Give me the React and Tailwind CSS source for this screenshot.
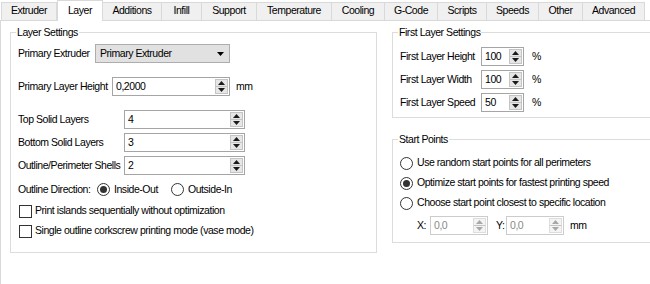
import React from "react";

const tabs = [
  { label: "Extruder", w: "w-[56px]" },
  { label: "Layer", w: "w-[46px]", active: true },
  { label: "Additions", w: "w-[59px]" },
  { label: "Infill", w: "w-[40px]" },
  { label: "Support", w: "w-[55px]" },
  { label: "Temperature", w: "w-[75px]" },
  { label: "Cooling", w: "w-[53px]" },
  { label: "G-Code", w: "w-[53px]" },
  { label: "Scripts", w: "w-[49px]" },
  { label: "Speeds", w: "w-[52px]" },
  { label: "Other", w: "w-[44px]" },
  { label: "Advanced", w: "w-[62px]" },
];

function Arrow({ up, color = "#000" }) {
  return (
    <svg width="7" height="4" viewBox="0 0 7 4" className="block">
      {up ? <path d="M0 4 L3.5 0 L7 4 Z" fill={color} /> : <path d="M0 0 L7 0 L3.5 4 Z" fill={color} />}
    </svg>
  );
}

function Spin({ value, width, disabled }) {
  return (
    <div
      className={`flex shrink-0 h-[19px] bg-white border ${width} ${
        disabled ? "border-[#cccccc] text-[#8a8a8a]" : "border-[#a5a5a5] text-black"
      }`}
    >
      <span className="flex-1 pl-[3px] leading-[17px] overflow-hidden">{value}</span>
      <div
        className={`flex flex-col w-[13px] my-px mr-px border ${
          disabled ? "border-[#dddddd] bg-[#f4f4f4]" : "border-[#c4c4c4] bg-[#e6e6e6]"
        }`}
      >
        <div className="flex-1 flex items-center justify-center border-b border-[#c4c4c4]">
          <Arrow up color={disabled ? "#a8a8a8" : "#1a1a1a"} />
        </div>
        <div className="flex-1 flex items-center justify-center">
          <Arrow color={disabled ? "#a8a8a8" : "#1a1a1a"} />
        </div>
      </div>
    </div>
  );
}

function Radio({ checked }) {
  return (
    <span className="w-[13px] h-[13px] rounded-full border border-[#333333] bg-white flex items-center justify-center shrink-0">
      {checked && <span className="w-[7px] h-[7px] rounded-full bg-[#333333]" />}
    </span>
  );
}

function Check() {
  return <span className="w-[13px] h-[13px] border border-[#333333] bg-white shrink-0" />;
}

function Group({ title, className, children }) {
  return (
    <div className={`relative border border-[#dcdcdc] ${className}`}>
      <span className="absolute -top-[7px] left-[5px] px-px bg-white leading-[13px]">{title}</span>
      {children}
    </div>
  );
}

export default function App() {
  return (
    <div className="w-[650px] h-[284px] overflow-hidden bg-white text-black text-[10.5px] whitespace-nowrap font-['Liberation_Sans',Arial,sans-serif] tracking-[-0.45px]">
      <div className="flex items-end h-[21px] pl-px">
        {tabs.map((t) =>
          t.active ? (
            <div
              key={t.label}
              className={`relative z-10 h-[21px] ${t.w} bg-white border border-b-0 border-[#d9d9d9] flex items-center justify-center pb-[1px]`}
            >
              {t.label}
            </div>
          ) : (
            <div
              key={t.label}
              className={`h-[19px] ${t.w} bg-[#f0f0f0] border border-l-0 first:border-l border-[#d9d9d9] flex items-center justify-center pb-[1px]`}
            >
              {t.label}
            </div>
          )
        )}
      </div>

      <div className="-mt-px w-[720px] h-[300px] border-l border-t border-[#d9d9d9] flex items-start pl-[9px] pt-[11px] gap-[15px]">
        <Group title="Layer Settings" className="w-[367px] pl-[7px] pt-[11px] pb-[11px]">
          <div className="flex items-center h-[19px]">
            <span className="w-[77px]">Primary Extruder</span>
            <div className="w-[135px] h-[19px] bg-[#e1e1e1] border border-[#adadad] flex items-center justify-between pl-[4px] pr-[5px]">
              <span>Primary Extruder</span>
              <Arrow />
            </div>
          </div>

          <div className="flex items-center h-[19px] mt-[14px]">
            <span className="w-[94px]">Primary Layer Height</span>
            <Spin value="0,2000" width="w-[118px]" />
            <span className="ml-[6px]">mm</span>
          </div>

          <div className="flex items-center h-[19px] mt-[14px]">
            <span className="w-[106px]">Top Solid Layers</span>
            <Spin value="4" width="w-[121px]" />
          </div>
          <div className="flex items-center h-[19px] mt-[4px]">
            <span className="w-[106px]">Bottom Solid Layers</span>
            <Spin value="3" width="w-[121px]" />
          </div>
          <div className="flex items-center h-[19px] mt-[4px]">
            <span className="w-[106px]">Outline/Perimeter Shells</span>
            <Spin value="2" width="w-[121px]" />
          </div>

          <div className="flex items-center h-[19px] mt-[5px]">
            <span className="w-[79px]">Outline Direction:</span>
            <Radio checked />
            <span className="ml-[4px] w-[57px]">Inside-Out</span>
            <Radio />
            <span className="ml-[4px]">Outside-In</span>
          </div>

          <div className="flex items-center gap-[3px] h-[20px] mt-[2px] pl-px">
            <Check />
            <span>Print islands sequentially without optimization</span>
          </div>
          <div className="flex items-center gap-[3px] h-[20px] pl-px">
            <Check />
            <span>Single outline corkscrew printing mode (vase mode)</span>
          </div>
        </Group>

        <div className="flex-1 flex flex-col gap-[21px]">
          <Group title="First Layer Settings" className="pl-[7px] pt-[14px] pb-[5px]">
            {[
              ["First Layer Height", "100"],
              ["First Layer Width", "100"],
              ["First Layer Speed", "50"],
            ].map(([label, v], i) => (
              <div key={label} className={`flex items-center h-[19px] ${i > 0 ? "mt-[4px]" : ""}`}>
                <span className="w-[81px]">{label}</span>
                <Spin value={v} width="w-[43px]" />
                <span className="ml-[8px]">%</span>
              </div>
            ))}
          </Group>

          <Group title="Start Points" className="pl-[7px] pt-[13px] pb-[7px]">
            <div className="flex items-center gap-[4px] h-[20px]">
              <Radio />
              <span>Use random start points for all perimeters</span>
            </div>
            <div className="flex items-center gap-[4px] h-[20px]">
              <Radio checked />
              <span>Optimize start points for fastest printing speed</span>
            </div>
            <div className="flex items-center gap-[4px] h-[20px]">
              <Radio />
              <span>Choose start point closest to specific location</span>
            </div>
            <div className="flex items-center h-[19px] mt-[3px] pl-[17px]">
              <span className="w-[13px]">X:</span>
              <Spin value="0,0" width="w-[58px]" disabled />
              <span className="ml-[8px] w-[10px]">Y:</span>
              <Spin value="0,0" width="w-[58px]" disabled />
              <span className="ml-[6px]">mm</span>
            </div>
          </Group>
        </div>
      </div>
    </div>
  );
}
